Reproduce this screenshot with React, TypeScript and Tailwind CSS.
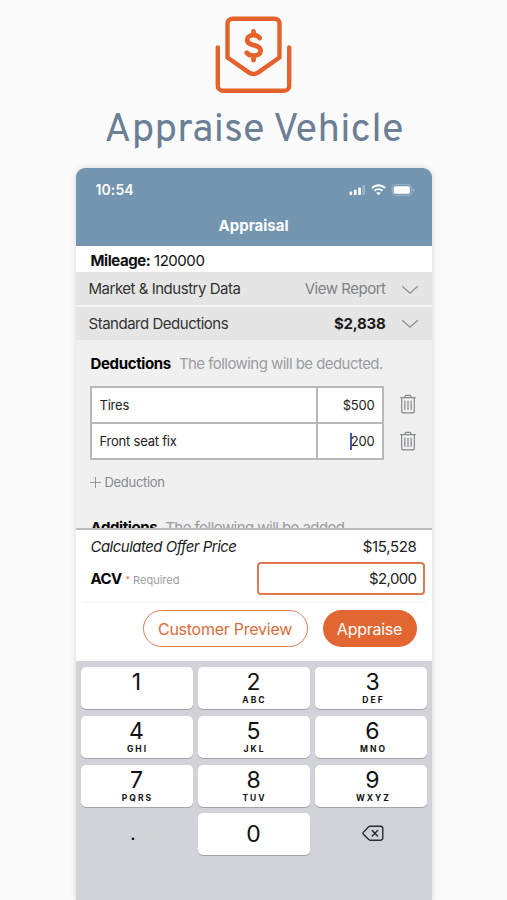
const KEYS = [
  { digit: "1", letters: "" },
  { digit: "2", letters: "ABC" },
  { digit: "3", letters: "DEF" },
  { digit: "4", letters: "GHI" },
  { digit: "5", letters: "JKL" },
  { digit: "6", letters: "MNO" },
  { digit: "7", letters: "PQRS" },
  { digit: "8", letters: "TUV" },
  { digit: "9", letters: "WXYZ" },
];

const DEDUCTIONS = [
  { name: "Tires", amount: "$500", editing: false },
  { name: "Front seat fix", amount: "200", editing: true },
];

function OfferIcon() {
  return (
    <svg width="78" height="78" viewBox="0 0 78 78" fill="none" stroke="#e5632b" strokeWidth="4.4" strokeLinecap="round" strokeLinejoin="round">
      <path d="M2.8 31.5v38.2a5 5 0 0 0 5 5h61.4a5 5 0 0 0 5-5V31.5" />
      <path d="M17.2 2.8h42.6a4.7 4.7 0 0 1 4.7 4.7v34L43.7 56.1a9 9 0 0 1-10.4 0L12.5 41.5v-34a4.7 4.7 0 0 1 4.7-4.7Z" />
      <path strokeWidth="4.8" d="M44.6 22c-1.2-1.8-3.3-2.8-6.1-2.8-4.1 0-6.3 1.9-6.3 4.8 0 6.5 13.4 3.8 13.4 10.5 0 3.2-2.8 5.1-6.9 5.1-3.2 0-5.4-.9-6.9-2.7M38.5 15.5v3.5M38.5 40v4" />
    </svg>
  );
}

function StatusIcons() {
  return (
    <svg width="68" height="14" viewBox="0 0 68 14" fill="#fff">
      <rect x="0.5" y="8.4" width="2.7" height="3.6" rx="0.7" />
      <rect x="4.9" y="6.8" width="2.7" height="5.2" rx="0.7" />
      <rect x="9.2" y="4.4" width="2.7" height="7.6" rx="0.7" />
      <rect x="13.4" y="2" width="2.6" height="10" rx="0.7" opacity="0.3" />
      <g fill="none" stroke="#fff" strokeWidth="1.9">
        <path d="M22.9 5a9.2 9.2 0 0 1 13.2 0" />
        <path d="M25.5 7.8a5.7 5.7 0 0 1 8 0" />
      </g>
      <path d="M29.5 12.3 27.2 10a3.3 3.3 0 0 1 4.6 0Z" />
      <rect x="43.2" y="1.7" width="19.4" height="10.6" rx="3" fill="none" stroke="#fff" opacity="0.3" />
      <rect x="44.7" y="3.2" width="16.2" height="7.6" rx="1.6" />
      <path d="M64 5.2c1.2.4 1.2 3.2 0 3.6Z" opacity="0.5" />
    </svg>
  );
}

function Chevron() {
  return (
    <svg width="18" height="10" viewBox="0 0 18 10" fill="none" stroke="#8b8d90" strokeWidth="1.2">
      <path d="M1.2 1.2 9 8.2l7.8-7" />
    </svg>
  );
}

function TrashIcon() {
  return (
    <svg width="16" height="20" viewBox="0 0 16 20" fill="none" stroke="#85888d" strokeWidth="1.2" strokeLinecap="round" strokeLinejoin="round">
      <path d="M.7 3.7h14.6M4.6 3.5l1.2-2.2h4.4l1.2 2.2M1.7 3.9v13a2 2 0 0 0 2 2h8.6a2 2 0 0 0 2-2v-13M4.9 7v8.4M8 7v8.4M11.1 7v8.4" />
    </svg>
  );
}

function BackspaceIcon() {
  return (
    <svg width="22" height="17" viewBox="0 0 22 17" fill="none" stroke="#2b2c2f" strokeWidth="1.4" strokeLinecap="round" strokeLinejoin="round">
      <path d="M8.1 1.2h10.4a2.3 2.3 0 0 1 2.3 2.3v9.4a2.3 2.3 0 0 1-2.3 2.3H8.1a2 2 0 0 1-1.4-.6L1.4 9.2a1.4 1.4 0 0 1 0-2l5.3-5.4a2 2 0 0 1 1.4-.6ZM10.2 5.5l5.4 5.4M15.6 5.5l-5.4 5.4" />
    </svg>
  );
}

export default function App() {
  return (
    <div className="flex h-[900px] w-[507px] flex-col items-center overflow-hidden bg-[#fbfbfb] font-['Inter',sans-serif]">
      <div className="flex h-[168px] shrink-0 flex-col items-center pl-px pt-4">
        <OfferIcon />
        <h1 className="mt-[13px] whitespace-nowrap font-['Overpass','Roboto',sans-serif] text-[40px] leading-[48px] tracking-[0.35px] text-[#6b8096]">
          Appraise Vehicle
        </h1>
      </div>

      <div className="flex w-[356px] flex-1 flex-col overflow-hidden rounded-t-[9px] bg-white shadow-[0_0_6px_rgba(0,0,0,0.15)]">
        {/* Header */}
        <div className="h-[78px] shrink-0 bg-[#7395af] text-white">
          <div className="flex items-center justify-between pl-5 pr-[15px] pt-[11px]">
            <span className="text-[14px] font-semibold leading-[21px] tracking-[0.1px]">10:54</span>
            <StatusIcons />
          </div>
          <p className="mt-4 text-center text-[15px] font-bold leading-[20px]">Appraisal</p>
        </div>

        <p className="h-[26px] shrink-0 pl-[15px] text-[15px] leading-[29px] tracking-[-0.45px] text-[#111]">
          <b>Mileage:</b> 120000
        </p>

        {/* Collapsed sections */}
        <div className="flex shrink-0 flex-col gap-[2px] bg-[#f4f4f4] text-[15px] tracking-[-0.48px] text-[#333]">
          <div className="flex h-[33px] items-center bg-[#e5e5e5] pl-[13px] pr-[13px] pt-[2px]">
            <span>Market &amp; Industry Data</span>
            <span className="ml-auto mr-[15px] text-[#808289]">View Report</span>
            <Chevron />
          </div>
          <div className="flex h-[33px] items-center bg-[#e5e5e5] pl-[13px] pr-[13px] pt-px">
            <span>Standard Deductions</span>
            <span className="ml-auto mr-[15px] font-bold tracking-[-0.25px] text-[#1c1c1c]">$2,838</span>
            <Chevron />
          </div>
        </div>

        {/* Deductions */}
        <div className="h-[188px] shrink-0 overflow-hidden bg-[#f0f0f0] px-[14px] pt-[14px]">
          <p className="flex gap-[8px] whitespace-nowrap pl-px text-[15px] leading-[20px]">
            <b className="tracking-[-0.35px] text-black">Deductions</b>
            <span className="tracking-[-0.55px] text-[#9b9da1]">The following will be deducted.</span>
          </p>
          <div className="mt-3 flex">
            <div className="flex w-[294px] flex-col gap-[2px] border-2 border-[#b8b8b8] bg-[#b8b8b8] text-[13px] tracking-[-0.22px] text-[#222]">
              {DEDUCTIONS.map((d) => (
                <div key={d.name} className="flex h-[34px] gap-[2px] leading-[34px]">
                  <span className="w-[224px] bg-white pl-[8px]">{d.name}</span>
                  <span className="flex flex-1 items-center justify-end bg-white pr-[7px]">
                    {d.editing && <i className="-mr-px h-[17px] w-[1.5px] bg-[#4a55c4]" />}
                    {d.amount}
                  </span>
                </div>
              ))}
            </div>
            <div className="ml-4 flex flex-col gap-[17px] pt-2">
              <TrashIcon />
              <TrashIcon />
            </div>
          </div>
          <p className="mt-[12px] flex items-center gap-1 text-[13px] leading-[20px] tracking-[-0.3px] text-[#85888e]">
            <svg width="11" height="11" viewBox="0 0 11 11" stroke="#94969b">
              <path d="M5.5 0v11M0 5.5h11" />
            </svg>
            Deduction
          </p>
          <p className="mt-[26px] flex gap-[8px] whitespace-nowrap pl-px text-[15px] leading-[20px]">
            <b className="tracking-[-0.4px] text-black">Additions</b>
            <span className="tracking-[-0.55px] text-[#9b9da1]">The following will be added.</span>
          </p>
        </div>

        {/* Offer summary */}
        <div className="h-[133px] shrink-0 border-t-2 border-[#bdbdbd] bg-white">
          <div className="flex justify-between pl-[15px] pr-[15px] pt-[7px] text-[15px] leading-[20px] text-[#222]">
            <i className="tracking-[-0.52px]">Calculated Offer Price</i>
            <span className="tracking-[-0.35px]">$15,528</span>
          </div>
          <div className="flex items-center pl-[15px] pr-[7px] pt-[5px]">
            <b className="pt-px text-[15px] tracking-[-0.6px] text-black">ACV</b>
            <span className="ml-1 pt-px text-[8px] font-bold text-[#e08458]">*</span>
            <span className="ml-[3px] pt-[3px] text-[11px] text-[#9b9da1]">Required</span>
            <span className="ml-auto h-[33px] w-[168px] rounded-[4px] border-2 border-[#dd7a51] pr-[6px] text-right text-[15px] leading-[29px] tracking-[-0.6px] text-[#222]">
              $2,000
            </span>
          </div>
          <div className="mx-[6px] mt-[7px] flex justify-end gap-[15px] border-t border-[#f3f3f3] pr-[9px] pt-[7px] text-[16px] tracking-[-0.25px]">
            <button className="h-[37px] w-[165px] rounded-full border border-[#dd7a51] text-[#dc6b3e]">Customer Preview</button>
            <button className="h-[37px] w-[94px] rounded-full bg-[#e26632] text-white">Appraise</button>
          </div>
        </div>

        {/* Keypad */}
        <div className="grid flex-1 auto-rows-[42px] grid-cols-3 gap-x-[5px] gap-y-[6.8px] bg-[#d1d3d9] px-[5px] pt-[6px] text-[#111]">
          {KEYS.map((k) => (
            <div key={k.digit} className="flex flex-col items-center rounded-[5px] bg-white pt-[2px] shadow-[0_1px_0_#a3a4a8] nth-[3n]:pl-[4px]">
              <span className="text-[23px] leading-[27px]">{k.digit}</span>
              <span className="pl-[2px] text-[8.5px] font-bold leading-[9px] tracking-[2px]">{k.letters}</span>
            </div>
          ))}
          <span className="flex items-center justify-center pb-[2px] pr-[7px] text-[20px]">.</span>
          <span className="flex items-center justify-center rounded-[5px] bg-white text-[23px] shadow-[0_1px_0_#a3a4a8]">0</span>
          <span className="flex items-center justify-center pb-px pl-[4px]">
            <BackspaceIcon />
          </span>
        </div>
      </div>
    </div>
  );
}
